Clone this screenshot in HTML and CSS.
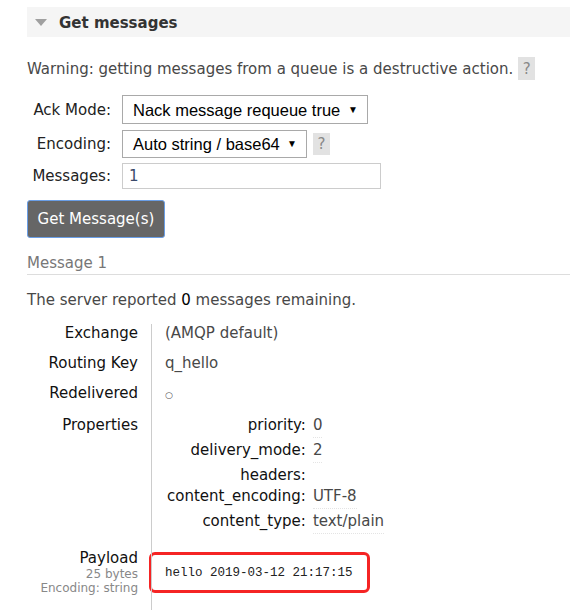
FILE: index.html
```html
<!DOCTYPE html>
<html>
<head>
<meta charset="utf-8">
<link rel="stylesheet" href="styles.css">
</head>
<body>
<div class="page">
  <div class="section-head">
    <svg class="tri" width="12" height="8" viewBox="0 0 12 8"><path d="M0 0H12L6 7Z" fill="#a0a0a0"/></svg>
    <h2>Get messages</h2>
  </div>
  <div class="warning">
    <span>Warning: getting messages from a queue is a destructive action.</span>
    <span class="help">?</span>
  </div>
  <div class="form">
    <div class="row r1">
      <label>Ack Mode:</label>
      <div class="select w1"><span>Nack message requeue true</span><span class="arrow">▼</span></div>
    </div>
    <div class="row r2">
      <label>Encoding:</label>
      <div class="select w2"><span>Auto string / base64</span><span class="arrow">▼</span></div>
      <span class="help help2">?</span>
    </div>
    <div class="row r3">
      <label>Messages:</label>
      <div class="input">1</div>
    </div>
  </div>
  <button class="btn">Get Message(s)</button>
  <h3 class="msg-title">Message 1</h3>
  <p class="server">The server reported <span class="num">0</span> messages remaining.</p>
  <table class="details">
    <tr><th>Exchange</th><td>(AMQP default)</td></tr>
    <tr><th>Routing Key</th><td>q_hello</td></tr>
    <tr class="redeliv"><th>Redelivered</th><td><span class="circle">○</span></td></tr>
    <tr><th>Properties</th><td>
      <table class="props">
        <tr><th>priority:</th><td><span class="val">0</span></td></tr>
        <tr><th>delivery_mode:</th><td><span class="val">2</span></td></tr>
        <tr><th>headers:</th><td></td></tr>
        <tr><th>content_encoding:</th><td><span class="val">UTF-8</span></td></tr>
        <tr><th>content_type:</th><td><span class="val">text/plain</span></td></tr>
      </table>
    </td></tr>
    <tr class="payload"><th>Payload<div class="sub">25 bytes</div><div class="sub">Encoding: string</div></th><td><pre>hello 2019-03-12 21:17:15</pre></td></tr>
  </table>
</div>
</body>
</html>
```

FILE: styles.css
```css
html, body {
  margin: 0;
  padding: 0;
  background: #fff;
}
body {
  font-family: "DejaVu Sans", Verdana, sans-serif;
  font-size: 15px;
  line-height: 18px;
  color: #484848;
}
.page {
  padding: 7px 0 0 27px;
}
.section-head {
  height: 30px;
  background: #f5f5f5;
  display: flex;
  align-items: center;
  padding-left: 8px;
}
.tri {
  display: block;
  margin-top: 1px;
}
.section-head h2 {
  margin: 1px 0 0 12px;
  font-size: 15px;
  font-weight: bold;
  color: #333;
}
.warning {
  margin-top: 20px;
  height: 23px;
  display: flex;
  align-items: center;
}
.help {
  display: inline-flex;
  align-items: center;
  justify-content: center;
  width: 17px;
  height: 23px;
  background: #e2e2e2;
  color: #888;
  margin-left: 5px;
}
.form {
  margin-top: 15px;
}
.row {
  display: flex;
  align-items: center;
}
.row label {
  width: 84px;
  text-align: right;
  color: #222;
  margin-right: 11px;
}
.r1 { height: 29px; }
.r2 { height: 28px; margin-top: 6px; }
.r3 { height: 26px; margin-top: 5px; }
.select {
  box-sizing: border-box;
  height: 100%;
  border: 1px solid #a9a9a9;
  display: flex;
  align-items: center;
  justify-content: space-between;
  padding: 0 9px 0 10px;
  font-family: "Liberation Sans", Arial, sans-serif;
  font-size: 16.5px;
  color: #000;
}
.select .arrow {
  font-size: 10px;
  color: #000;
}
.w1 { width: 246px; }
.w2 { width: 185px; }
.help2 {
  height: 22px;
  margin-left: 6px;
}
.input {
  box-sizing: border-box;
  width: 259px;
  height: 100%;
  border: 1px solid #ccc;
  padding: 0 6px;
  display: flex;
  align-items: center;
  color: #3a4a6a;
}
.btn {
  display: block;
  margin-top: 11px;
  box-sizing: border-box;
  width: 138px;
  height: 38px;
  background: #666;
  color: #fff;
  border: 1px solid #6a9ee6;
  border-radius: 3px;
  font-family: "DejaVu Sans", Verdana, sans-serif;
  font-size: 15px;
  padding: 0;
}
.msg-title {
  margin: 16px 0 0 0;
  font-size: 15px;
  font-weight: normal;
  color: #777;
  padding-bottom: 2px;
  border-bottom: 1px solid #ddd;
}
.server {
  margin: 16px 0 0 0;
}
.num {
  color: #000;
}
.details {
  margin-top: 15px;
  border-collapse: collapse;
  border-spacing: 0;
}
.details > tbody > tr > th {
  width: 111px;
  padding: 0 13px 12px 0;
  text-align: right;
  vertical-align: top;
  font-weight: normal;
  color: #111;
}
.details > tbody > tr > td {
  border-left: 1px solid #ccc;
  padding: 0 0 12px 13px;
  vertical-align: top;
}
.circle {
  font-size: 9px;
  color: #555;
}
.props {
  border-collapse: collapse;
  margin-left: 2px;
}
.props th {
  text-align: right;
  font-weight: normal;
  color: #111;
  padding: 0 7px 3px 0;
  vertical-align: top;
}
.props td {
  padding: 0 0 3px 0;
  vertical-align: top;
}
.props .val {
  display: inline-block;
  padding-bottom: 3px;
  border-bottom: 1px dotted #e4e4e4;
}
.sub {
  font-size: 12px;
  line-height: 14px;
  color: #888;
}
.details > tbody > tr.payload > th {
  padding-bottom: 15px;
}
.details > tbody > tr.payload > td {
  padding: 3px 0 15px 0;
}
pre {
  margin: 0 0 0 -3px;
  box-sizing: border-box;
  width: 221px;
  height: 41px;
  border: 3px solid #f52424;
  border-radius: 6px;
  padding: 0 0 0 13px;
  display: flex;
  align-items: center;
  font-family: "Liberation Mono", "Courier New", monospace;
  font-size: 12.5px;
  color: #222;
}
```
